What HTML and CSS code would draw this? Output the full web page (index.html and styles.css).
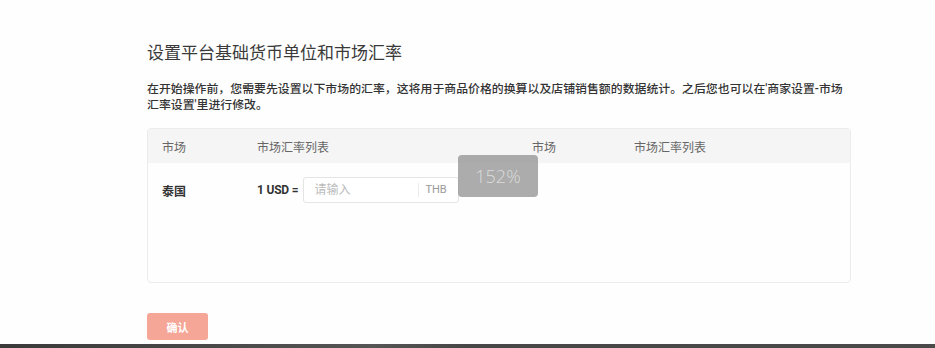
FILE: index.html
```html
<!DOCTYPE html>
<html lang="zh-CN">
<head>
    <meta charset="UTF-8">
    <meta name="viewport" content="width=device-width, initial-scale=1.0">
    <title>设置平台基础货币单位和市场汇率</title>
    <link rel="stylesheet" href="styles.css">
</head>
<body>

<div class="page">
    <h2 class="title">设置平台基础货币单位和市场汇率</h2>
    <p class="desc">在开始操作前，您需要先设置以下市场的汇率，这将用于商品价格的换算以及店铺销售额的数据统计。之后您也可以在'商家设置-市场汇率设置'里进行修改。</p>

    <div class="rate-card">
        <div class="rate-head">
            <span>市场</span>
            <span>市场汇率列表</span>
            <span>市场</span>
            <span>市场汇率列表</span>
        </div>
        <div class="rate-row">
            <span class="market">泰国</span>
            <div class="rate-cell">
                <span class="base">1 USD =</span>
                <label class="rate-input">
                    <input type="text" placeholder="请输入">
                    <span class="unit">THB</span>
                </label>
            </div>
        </div>
    </div>

    <button class="btn-confirm">确认</button>
</div>

<!-- 缩放提示 -->
<div class="zoom-tip">152%</div>

<div class="bottom-strip"></div>

</body>
</html>
```

FILE: styles.css
```css
html, body {
    margin: 0;
    height: 348px;
    overflow: hidden;
}
body {
    font-family: Roboto, "Noto Sans CJK SC", sans-serif;
    background-color: #fefefe;
    color: #333;
    display: flex;
    flex-direction: column;
    position: relative;
}
.page {
    padding: 41px 0 0 147px;
    width: 704px;
}
.title {
    margin: 0;
    font-size: 17px;
    line-height: 24px;
    font-weight: 400;
    color: #3a3a3a;
}
.desc {
    margin: 16px 0 0;
    max-width: 702px;
    font-size: 11.9px;
    line-height: 16px;
    font-weight: 500;
    color: #333;
}
.rate-card {
    margin-top: 15px;
    border: 1px solid #ececec;
    border-radius: 4px;
    height: 153px;
    overflow: hidden;
}
.rate-head, .rate-row {
    display: grid;
    grid-template-columns: 95px 275px 102px 1fr;
}
.rate-head {
    background-color: #f5f5f5;
    height: 34px;
    align-items: center;
    font-size: 12px;
    color: #666;
}
.rate-head span, .rate-row > * {
    padding-left: 14px;
}
.rate-row {
    padding-top: 14px;
    font-size: 12px;
    align-items: center;
}
.market {
    font-weight: bold;
    color: #333;
}
.rate-cell {
    display: flex;
    align-items: center;
    gap: 5px;
}
.base {
    font-weight: bold;
    color: #333;
    letter-spacing: -0.2px;
}
.rate-input {
    display: flex;
    align-items: center;
    width: 154px;
    height: 24px;
    border: 1px solid #e4e4e4;
    border-radius: 3px;
    background: #fff;
}
.rate-input input {
    width: 104px;
    border: none;
    outline: none;
    padding: 0 0 0 10px;
    font-family: inherit;
    font-size: 12px;
    background: transparent;
}
.rate-input input::placeholder {
    color: #bbb;
}
.unit {
    border-left: 1px solid #ececec;
    padding-left: 6px;
    line-height: 14px;
    color: #999;
    font-size: 11px;
}
.btn-confirm {
    margin-top: 30px;
    width: 61px;
    height: 27px;
    border: none;
    border-radius: 3px;
    background-color: #f5a697;
    color: #fff;
    font-family: inherit;
    font-size: 11px;
    font-weight: bold;
}
.zoom-tip {
    position: absolute;
    left: 458px;
    top: 155px;
    width: 80px;
    height: 42px;
    border-radius: 4px;
    background-color: rgba(150, 151, 150, 0.8);
    color: #dcdcdc;
    font-family: "Open Sans", sans-serif;
    font-weight: 300;
    font-size: 18px;
    display: flex;
    align-items: center;
    justify-content: center;
}
.bottom-strip {
    margin-top: auto;
    height: 4px;
    background: linear-gradient(to right, #3a3a3a 0, #555 40%, #474747 50%, #4a4a4a 100%);
}
```
